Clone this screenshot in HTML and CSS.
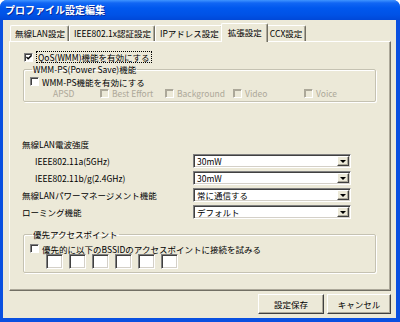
FILE: index.html
```html
<!DOCTYPE html>
<html lang="ja">
<head>
    <meta charset="UTF-8">
    <title>プロファイル設定編集</title>
    <link rel="stylesheet" href="styles.css">
</head>
<body>
    <div class="window">
        <div class="titlebar">プロファイル設定編集</div>
        <div class="client">
            <div class="tabs">
                <div class="tab">無線LAN設定</div>
                <div class="tab">IEEE802.1x認証設定</div>
                <div class="tab">IPアドレス設定</div>
                <div class="tab active">拡張設定</div>
                <div class="tab">CCX設定</div>
            </div>

            <div class="panel">
                <label class="check qos">
                    <span class="cb"><svg width="7" height="7" viewBox="0 0 7 7"><path d="M0.5 3 L2.5 5 L6.5 1" fill="none" stroke="#000" stroke-width="1.6"/></svg></span>
                    <span class="focus">QoS(WMM)機能を有効にする</span>
                </label>

                <fieldset class="group">
                    <legend>WMM-PS(Power Save)機能</legend>
                    <label class="check"><span class="cb"></span>WMM-PS機能を有効にする</label>
                    <div class="ac-row">
                        <span>APSD</span>
                        <label class="check"><span class="cb"></span>Best Effort</label>
                        <label class="check"><span class="cb"></span>Background</label>
                        <label class="check"><span class="cb"></span>Video</label>
                        <label class="check"><span class="cb"></span>Voice</label>
                    </div>
                </fieldset>

                <div class="settings">
                    <div class="section">無線LAN電波強度</div>
                    <div class="label sub">IEEE802.11a(5GHz)</div>
                    <div class="combo">30mW<span class="drop"></span></div>
                    <div class="label sub">IEEE802.11b/g(2.4GHz)</div>
                    <div class="combo">30mW<span class="drop"></span></div>
                    <div class="label">無線LANパワーマネージメント機能</div>
                    <div class="combo">常に通信する<span class="drop"></span></div>
                    <div class="label">ローミング機能</div>
                    <div class="combo">デフォルト<span class="drop"></span></div>
                </div>

                <fieldset class="group pref">
                    <legend>優先アクセスポイント</legend>
                    <label class="check"><span class="cb"></span>優先的に以下のBSSIDのアクセスポイントに接続を試みる</label>
                    <div class="bssid">
                        <span class="box"></span>
                        <span class="box"></span>
                        <span class="box"></span>
                        <span class="box"></span>
                        <span class="box"></span>
                        <span class="box"></span>
                    </div>
                </fieldset>
            </div>

            <div class="buttons">
                <button class="save">設定保存</button>
                <button class="cancel">キャンセル</button>
            </div>
        </div>
    </div>
</body>
</html>
```

FILE: styles.css
```css
body {
    margin: 0;
    background: #fff;
    font-family: "Noto Sans CJK JP", sans-serif;
    font-size: 8.5px;
    color: #000;
}
.window {
    width: 400px;
    height: 322px;
    display: flex;
    flex-direction: column;
    background: #0A50E0;
    border-radius: 7px 7px 0 0;
    overflow: hidden;
}
.titlebar {
    height: 20px;
    flex: none;
    padding-left: 5px;
    line-height: 19px;
    color: #fff;
    font-size: 10px;
    font-weight: bold;
    text-shadow: 1px 1px #0A2A9A;
    background: linear-gradient(#3F94FF 0, #1166F4 3px, #0058EE 8px, #0052E6 15px, #0048D8 20px);
}
.client {
    flex: 1;
    margin: 0 4px 4px 3px;
    padding: 3px 5px 4px 6px;
    background: #ECE9D8;
    display: flex;
    flex-direction: column;
}

/* tabs */
.tabs {
    display: flex;
    align-items: flex-end;
    height: 18px;
    padding-left: 1px;
}
.tab {
    height: 16px;
    line-height: 15px;
    padding: 0 3px 0 4px;
    border-top: 1px solid #fff;
    border-left: 1px solid #fff;
    border-right: 1px solid #716F64;
    border-radius: 2px 2px 0 0;
    box-sizing: border-box;
    box-shadow: inset -1px 0 #ACA899;
    white-space: nowrap;
}
.tab.active {
    height: 19px;
    margin: 0 -2px -1px;
    padding: 0 5px 0 6px;
    line-height: 17px;
    background: #ECE9D8;
    position: relative;
    z-index: 1;
}
.tab.active + .tab {
    border-left: none;
}

.panel {
    height: 250px;
    box-sizing: border-box;
    border: 1px solid;
    border-color: #fff #716F64 #716F64 #fff;
    box-shadow: inset -1px -1px #ACA899;
}

/* checkboxes */
.check {
    display: flex;
    align-items: center;
    height: 11px;
    white-space: nowrap;
}
.cb {
    width: 9px;
    height: 9px;
    box-sizing: border-box;
    flex: none;
    margin-right: 3px;
    background: #fff;
    border: 1px solid;
    border-color: #808080 #fff #fff #808080;
    box-shadow: inset 1px 1px #404040;
    display: flex;
    align-items: center;
    justify-content: center;
}
.cb svg {
    margin: 1px 0 0 1px;
}
.qos {
    height: 12px;
    margin: 9px 0 0 14px;
}
.focus {
    display: inline-block;
    height: 10px;
    padding: 0 1px;
    line-height: 10px;
    border: 1px dotted #000;
}

/* group boxes */
.group {
    margin: 0 14px 0 13px;
    padding: 1px 0 3px 6px;
    border: 1px solid #C5C2B2;
    border-radius: 2px;
    box-shadow: 1px 1px #fff, inset 1px 1px #fff;
}
.group legend {
    padding: 0 1px;
    margin-left: 2px;
    line-height: 12px;
}
.ac-row {
    display: grid;
    grid-template-columns: 47px 65px 68px 71px auto;
    align-items: center;
    height: 11px;
    padding-left: 23px;
    color: #ACA899;
}
.ac-row .cb {
    background: #ECE9D8;
    border-color: #ACA899 #fff #fff #ACA899;
    box-shadow: inset 1px 1px #ACA899;
}

/* combo rows */
.settings {
    display: grid;
    grid-template-columns: 171px 158px;
    grid-auto-rows: 17px;
    align-items: center;
    margin: 33px 0 0 12px;
}
.section {
    grid-column: 1 / 3;
    height: 16px;
    line-height: 16px;
}
.settings .sub {
    padding-left: 13px;
}
.combo {
    height: 14px;
    box-sizing: border-box;
    display: flex;
    align-items: center;
    justify-content: space-between;
    padding: 0 1px 0 3px;
    background: #fff;
    border: 1px solid;
    border-color: #808080 #fff #fff #808080;
    box-shadow: inset 1px 1px #404040, inset -1px -1px #D4D0C8;
}
.drop {
    width: 12px;
    height: 10px;
    box-sizing: border-box;
    background: #ECE9D8;
    border: 1px solid;
    border-color: #fff #404040 #404040 #fff;
    box-shadow: inset -1px -1px #ACA899;
    position: relative;
}
.drop::after {
    content: "";
    position: absolute;
    left: 2px;
    top: 3px;
    border-style: solid;
    border-width: 3px 3px 0;
    border-color: #000 transparent transparent;
}

.pref {
    margin-top: 8px;
}
.pref .check {
    margin-top: 2px;
}
.bssid {
    display: flex;
    gap: 6px;
    margin: 0 0 0 16px;
}
.box {
    width: 17px;
    height: 15px;
    box-sizing: border-box;
    background: #fff;
    border: 1px solid;
    border-color: #808080 #fff #fff #808080;
    box-shadow: inset 1px 1px #404040, inset -1px -1px #D4D0C8;
}

/* buttons */
.buttons {
    display: flex;
    justify-content: flex-end;
    gap: 3px;
    margin-top: 3px;
}
button {
    height: 20px;
    padding: 0;
    font-family: inherit;
    font-size: 8.5px;
    background: #ECE9D8;
    border: 1px solid;
    border-color: #fff #404040 #404040 #fff;
    box-shadow: inset -1px -1px #ACA899;
}
.save {
    width: 66px;
}
.cancel {
    width: 64px;
}
```
